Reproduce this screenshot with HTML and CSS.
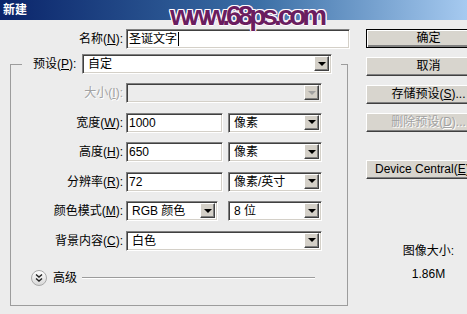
FILE: index.html
```html
<!DOCTYPE html>
<html lang="zh-CN">
<head>
    <meta charset="UTF-8">
    <title>新建</title>
    <link rel="stylesheet" href="styles.css">
</head>
<body>
<div class="titlebar">新建</div>
<div class="watermark">www.68ps.com</div>

<div class="content">
    <div class="main">
        <div class="name-row">
            <span class="label">名称(<u>N</u>):</span>
            <div class="field text">圣诞文字<span class="caret"></span></div>
        </div>

        <fieldset class="group">
            <legend class="preset">
                <span class="label">预设(<u>P</u>):</span>
                <div class="field select wide"><span class="val">自定</span><span class="arrow"></span></div>
            </legend>

            <div class="rows">
                <div class="row">
                    <span class="label disabled">大小(<u>I</u>):</span>
                    <div class="field select off"><span class="val"></span><span class="arrow"></span></div>
                </div>
                <div class="row">
                    <span class="label">宽度(<u>W</u>):</span>
                    <div class="pair">
                        <div class="field text num">1000</div>
                        <div class="field select unit"><span class="val">像素</span><span class="arrow"></span></div>
                    </div>
                </div>
                <div class="row">
                    <span class="label">高度(<u>H</u>):</span>
                    <div class="pair">
                        <div class="field text num">650</div>
                        <div class="field select unit"><span class="val">像素</span><span class="arrow"></span></div>
                    </div>
                </div>
                <div class="row">
                    <span class="label">分辨率(<u>R</u>):</span>
                    <div class="pair">
                        <div class="field text num">72</div>
                        <div class="field select unit"><span class="val">像素/英寸</span><span class="arrow"></span></div>
                    </div>
                </div>
                <div class="row">
                    <span class="label">颜色模式(<u>M</u>):</span>
                    <div class="pair">
                        <div class="field select mode"><span class="val">RGB 颜色</span><span class="arrow"></span></div>
                        <div class="field select unit"><span class="val">8 位</span><span class="arrow"></span></div>
                    </div>
                </div>
                <div class="row">
                    <span class="label">背景内容(<u>C</u>):</span>
                    <div class="field select"><span class="val">白色</span><span class="arrow"></span></div>
                </div>
            </div>

            <div class="advanced">
                <svg class="expand" width="16" height="16" viewBox="0 0 16 16">
                    <defs>
                        <linearGradient id="g" x1="0" y1="0" x2="0" y2="1">
                            <stop offset="0" stop-color="#ffffff"/>
                            <stop offset="1" stop-color="#d6d6d6"/>
                        </linearGradient>
                    </defs>
                    <circle cx="8" cy="8" r="7.5" fill="url(#g)" stroke="#a8a8a8"/>
                    <path d="M5 4.5 L8 7 L11 4.5 M5 8.5 L8 11 L11 8.5" fill="none" stroke="#222" stroke-width="1.4"/>
                </svg>
                <span>高级</span>
                <span class="rule"></span>
            </div>
        </fieldset>
    </div>

    <div class="side">
        <div class="btn default">确定</div>
        <div class="btn">取消</div>
        <div class="btn">存储预设(<u>S</u>)...</div>
        <div class="btn disabled">删除预设(<u>D</u>)...</div>
        <div class="btn device">Device Central(<u>E</u>)...</div>
        <div class="size-title">图像大小:</div>
        <div class="size-value">1.86M</div>
    </div>
</div>
</body>
</html>
```

FILE: styles.css
```css
* {
    margin: 0;
    padding: 0;
    box-sizing: border-box;
}

body {
    position: relative;
    width: 467px;
    height: 314px;
    overflow: hidden;
    background: #ececec;
    color: #000;
    font: 12px/16px "Liberation Sans", "Noto Sans CJK SC", sans-serif;
}

u {
    text-decoration: underline;
    text-underline-offset: 1px;
}

.titlebar {
    height: 20px;
    padding: 2px 0 0 3px;
    background: linear-gradient(to right, #0a246a, #3a6ea5 55%, #a6caf0);
    color: #fff;
    font-weight: bold;
}

.watermark {
    position: absolute;
    left: 170px;
    top: 1px;
    font: bold 28px/29px "Liberation Sans", sans-serif;
    letter-spacing: -4px;
    color: #6b1d60;
    text-shadow: 1px 0 #fff, -1px 0 #fff, 0 1px #fff, 0 -1px #fff,
                 1px 1px #f3d9ef, -1px -1px #f3d9ef, 1px -1px #f3d9ef, -1px 1px #f3d9ef;
}

.content {
    display: flex;
    padding-top: 9px;
}

.main {
    flex: none;
    width: 356px;
}

.label {
    text-align: right;
    white-space: nowrap;
}

.label.disabled {
    color: #a2a2a2;
    text-shadow: 1px 1px #fff;
}

/* sunken controls */
.field {
    height: 20px;
    background: #fff;
    border: 1px solid;
    border-color: #808080 #fff #fff #808080;
    box-shadow: inset 1px 1px #404040, inset -1px -1px #d4d0c8;
}

.field.text {
    padding: 1px 0 0 2px;
}

.caret {
    display: inline-block;
    width: 1px;
    height: 14px;
    margin-left: 1px;
    vertical-align: -3px;
    background: #000;
}

.field.select {
    display: flex;
    align-items: stretch;
}

.select .val {
    flex: 1;
    padding: 1px 0 0 5px;
    white-space: nowrap;
}

.arrow {
    flex: none;
    width: 15px;
    margin: 1px 2px 2px 0;
    background: #d4d0c8;
    border: 1px solid;
    border-color: #fff #404040 #404040 #fff;
    box-shadow: inset -1px -1px #808080;
    display: flex;
    align-items: center;
    justify-content: center;
}

.arrow::before {
    content: "";
    border-left: 4px solid transparent;
    border-right: 4px solid transparent;
    border-top: 4px solid #000;
}

.select.off {
    background: #ececec;
}

.select.off .arrow::before {
    border-top-color: #a0a0a0;
}

.name-row {
    display: grid;
    grid-template-columns: 123px 224px;
    column-gap: 3px;
    align-items: center;
}

/* group box */
.group {
    width: 338px;
    margin: 5px 0 0 10px;
    padding: 0 0 19px;
    border: 1px solid #9c9c9c;
}

.preset {
    margin-left: 11px;
    padding: 0 9px 0 11px;
}

.preset,
.preset > div {
    display: flex;
    align-items: center;
}

.preset .label {
    width: 46px;
    margin-right: 3px;
    text-align: left;
}

.field.wide {
    width: 250px;
}

.rows {
    display: flex;
    flex-direction: column;
    gap: 9.6px;
    padding-top: 9px;
}

.row {
    display: grid;
    grid-template-columns: 112px 196px;
    column-gap: 3px;
    align-items: center;
}

.pair {
    display: flex;
    justify-content: space-between;
}

.field.num {
    width: 97px;
}

.field.unit {
    width: 94px;
}

.field.mode {
    width: 92px;
}

.advanced {
    display: flex;
    align-items: center;
    height: 16px;
    margin-top: 19px;
    padding-left: 20px;
}

.expand {
    margin-right: 6px;
}

.rule {
    flex: 1;
    height: 1px;
    margin: 0 32px 0 5px;
    background: #9c9c9c;
    box-shadow: 0 1px #fff;
}

/* right column */
.side {
    flex: none;
    width: 125px;
    margin-left: 10px;
    display: flex;
    flex-direction: column;
    gap: 9px;
    text-align: center;
}

.btn {
    height: 19px;
    line-height: 16px;
    white-space: nowrap;
    overflow: hidden;
    background: #d8d5ce;
    border: 1px solid;
    border-color: #fff #404040 #404040 #fff;
    box-shadow: inset -1px -1px #808080;
}

.btn.default {
    border-color: #000;
    box-shadow: inset 1px 1px #fff, inset -2px -2px #808080;
}

.btn.disabled {
    color: #a2a2a2;
    text-shadow: 1px 1px #fff;
}

.btn.device {
    margin-top: 19px;
    text-align: left;
    padding-left: 8px;
}

.size-title {
    margin-top: 55px;
}

.size-value {
    margin-top: -2px;
}
```
